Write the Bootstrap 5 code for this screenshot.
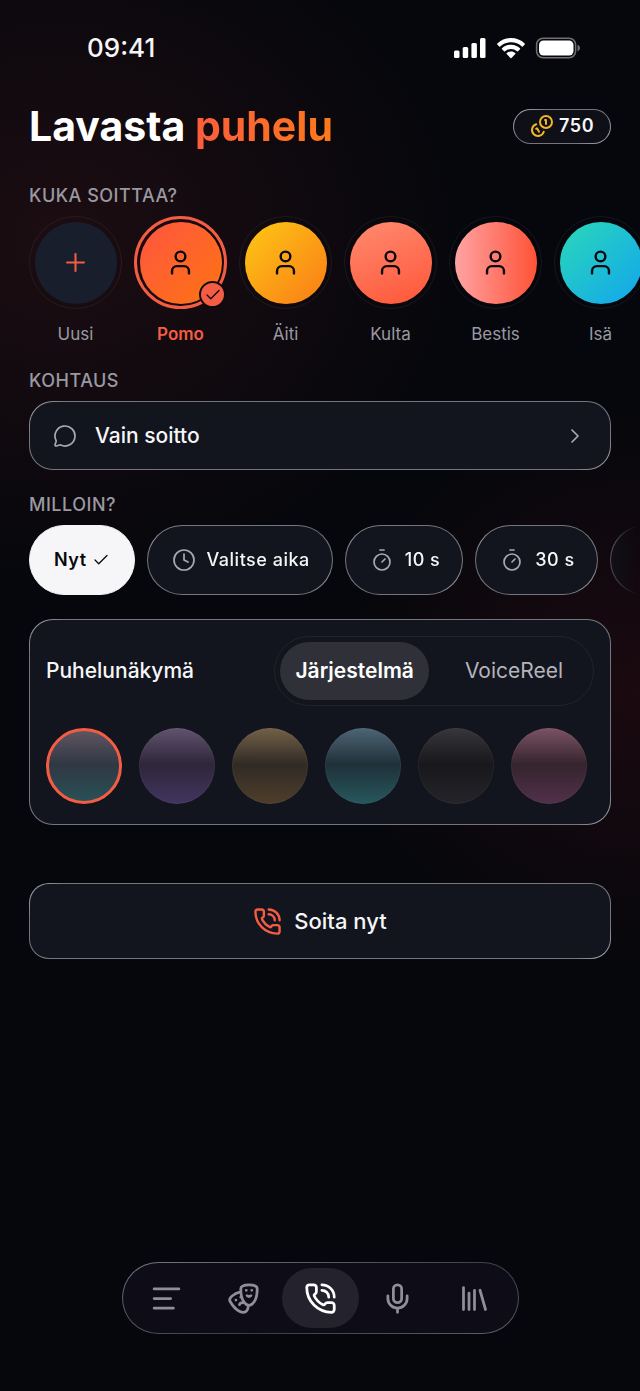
<!DOCTYPE html>
<html lang="fi" data-bs-theme="dark">
<head>
<meta charset="utf-8">
<meta name="viewport" content="width=device-width, initial-scale=1">
<title>Lavasta puhelu</title>
<link href="https://cdn.jsdelivr.net/npm/bootstrap@5.3.0/dist/css/bootstrap.min.css" rel="stylesheet">
<style>
  :root { --coral: #f45d43; --muted: #9a99a1; --fill: #12141e; --ink: #08080d; --edge: 29px; }
  body {
    font-family: Inter, "Liberation Sans", sans-serif;
    color: #f6f6f8;
    background:
      radial-gradient(400px 340px at 60px 240px, #1c0d12 0%, #1c0d1200 100%),
      radial-gradient(300px 280px at 100% 690px, #1b0a10 0%, #1b0a1000 100%),
      #06070c;
  }
  svg { fill: none; stroke: currentColor; stroke-width: 2; stroke-linecap: round; stroke-linejoin: round; flex: none; }
  .i18 { width: 18px; height: 18px; }
  .i24 { width: 24px; height: 24px; }
  .i29 { width: 29px; height: 29px; }
  .i33 { width: 33px; height: 33px; }
  .thin { stroke-width: 1.7; }
  .edge-x { padding-left: var(--edge); padding-right: var(--edge); }

  .status { height: 96px; padding: 0 59px 0 87px; }
  .status-icons { gap: 9px; }
  .clock { font-size: 26px; font-weight: 500; line-height: 32px; }
  .status svg { stroke: none; fill: #fff; }

  .page-head { margin-top: 6px; }
  .page-title { font-size: 41px; line-height: 48px; font-weight: 700; }
  .accent { background: linear-gradient(90deg, #fc5c3d, #fb7a1a); -webkit-background-clip: text; background-clip: text; color: transparent; }
  .glass {
    border: 1px solid transparent;
    color: #f6f6f8;
    background:
      linear-gradient(var(--fill), var(--fill)) padding-box,
      linear-gradient(135deg, #b0b0b6 0, #75767d 25px, #75767d calc(100% - 25px), #b0b0b6 100%) border-box;
  }
  .coins { height: 35px; padding: 0 16px; gap: 5px; font-size: 18px; line-height: 24px; font-weight: 600; letter-spacing: .5px; --fill: #0e0f17; }
  .coins svg { color: #f0b429; }

  .block { margin-top: 23px; }
  .block.first { margin-top: 34px; }
  .block-label { font-size: 18px; line-height: 24px; font-weight: 500; letter-spacing: .5px; color: var(--muted); margin-bottom: 8px; }
  .scroller { overflow-x: auto; scrollbar-width: none; gap: 12px; }
  .scroller::-webkit-scrollbar { display: none; }

  .contact { width: 93px; flex: none; font-size: 17px; line-height: 24px; color: var(--muted); gap: 13px; }
  .ring { width: 93px; height: 93px; border: 1px solid #ffffff10; }
  .face { width: 82px; height: 82px; color: var(--ink); }
  .face.add { background: #191e2d; color: var(--coral); }
  .picked { color: var(--coral); font-weight: 600; }
  .picked .ring { border: 3px solid var(--coral); }
  .tick { right: -2px; bottom: -2px; width: 27px; height: 27px; background: var(--coral); color: var(--ink); border: 2px solid #10090d; }

  .scene { height: 69px; border-radius: 24px; padding: 0 23px; gap: 18px; font-size: 21px; line-height: 28px; font-weight: 500; }
  .scene svg, .when svg { color: #a9a9b1; }

  .times { -webkit-mask-image: linear-gradient(90deg, #000 calc(100% - 45px), transparent calc(100% - 2px)); mask-image: linear-gradient(90deg, #000 calc(100% - 45px), transparent calc(100% - 2px)); }
  .when { height: 70px; flex: none; padding: 0 22px 0 24px; gap: 11px; font-size: 18px; line-height: 24px; font-weight: 500; letter-spacing: .5px; cursor: pointer; }
  .btn-check:checked + .when { background: #f6f6f8; border-color: #f6f6f8; color: var(--ink); font-weight: 600; gap: 5px; padding: 0 24px; }
  .btn-check:checked + .when svg { color: var(--ink); }

  .look { margin-top: 24px; border-radius: 24px; padding: 16px; }
  .look-title { font-size: 21px; line-height: 28px; font-weight: 500; }
  .switch { height: 70px; padding: 5px; border: 1px solid #ffffff10; }
  .switch label { padding: 0 15px; font-size: 21px; line-height: 28px; color: #b5b4bc; cursor: pointer; }
  .switch label.wide { padding: 0 25px 0 36px; }
  .switch .btn-check:checked + label { background: #303038; color: #fff; font-weight: 600; }
  .swatches { margin-top: 22px; gap: 17px; padding-bottom: 4px; }
  .swatch { width: 76px; height: 76px; border: 1px solid #ffffff0c; cursor: pointer; background: linear-gradient(var(--a), var(--b) 48%, var(--c)) border-box; }
  .btn-check:checked + .swatch { border: 3px solid var(--coral); }

  .call { margin-top: 58px; height: 76px; border-radius: 20px; font-size: 22px; line-height: 28px; font-weight: 500; gap: 12px; }
  .call svg { color: var(--coral); }

  .dock { height: 72px; padding: 5px; margin-bottom: 57px; --fill: #0d0c17;
    background:
      linear-gradient(var(--fill), var(--fill)) padding-box,
      linear-gradient(165deg, #77777f, #3c3c45 60%, #606068) border-box; }
  .dock a { width: 77px; height: 60px; color: #8f8e9b; }
  .dock a.active { background: #24232d; color: #fff; }
</style>
</head>
<body>
<svg class="d-none" aria-hidden="true">
  <symbol id="person" viewBox="0 0 24 24"><path d="M19 21v-2a4 4 0 0 0-4-4H9a4 4 0 0 0-4 4v2"/><circle cx="12" cy="7" r="4"/></symbol>
  <symbol id="check" viewBox="0 0 24 24"><path d="M20 6 9 17l-5-5"/></symbol>
  <symbol id="timer" viewBox="0 0 24 24"><path d="M10 2h4M12 14l3-3"/><circle cx="12" cy="14" r="8"/></symbol>
  <symbol id="phone" viewBox="0 0 24 24"><path d="M13 2a9 9 0 0 1 9 9M13 6a5 5 0 0 1 5 5"/><path d="M13.832 16.568a1 1 0 0 0 1.213-.303l.355-.465A2 2 0 0 1 17 15h3a2 2 0 0 1 2 2v3a2 2 0 0 1-2 2A18 18 0 0 1 2 4a2 2 0 0 1 2-2h3a2 2 0 0 1 2 2v3a2 2 0 0 1-.8 1.6l-.468.351a1 1 0 0 0-.292 1.233 14 14 0 0 0 6.392 6.384"/></symbol>
</svg>

<div class="d-flex flex-column min-vh-100 overflow-hidden">
  <div class="status d-flex align-items-center justify-content-between">
    <span class="clock">09:41</span>
    <div class="status-icons d-flex align-items-center">
      <svg width="34" height="22" viewBox="0 0 34 22" aria-hidden="true"><rect x="1" y="13.500" width="5.500" height="7.500" rx="1.500"/><rect x="9.700" y="10" width="5.500" height="11" rx="1.500"/><rect x="18.400" y="6" width="5.500" height="15" rx="1.500"/><rect x="27" y="1" width="5.500" height="20" rx="1.500"/></svg>
      <svg width="30" height="22" viewBox="0 0 30 22" aria-hidden="true"><path d="M15 1c5.300 0 10.100 2 13.700 5.400.3.300.3.700 0 1l-1.900 2c-.3.300-.7.300-1 0A15.700 15.700 0 0 0 15 5.200c-4.100 0-7.900 1.600-10.800 4.200-.3.300-.7.300-1 0l-1.900-2c-.3-.3-.3-.7 0-1A19.900 19.900 0 0 1 15 1Z"/><path d="M15 7.800c3.500 0 6.600 1.300 9 3.500.3.300.3.700 0 1l-2 2c-.3.300-.7.300-1 0a9 9 0 0 0-12 0c-.3.300-.7.300-1 0l-2-2c-.3-.3-.3-.7 0-1 2.400-2.200 5.500-3.500 9-3.500Z"/><path d="M15 14.500c1.700 0 3.200.6 4.300 1.600.3.300.3.700 0 1l-3.800 3.800c-.3.300-.7.300-1 0l-3.800-3.800c-.3-.3-.3-.7 0-1a6.400 6.400 0 0 1 4.300-1.600Z"/></svg>
      <svg width="46" height="22" viewBox="0 0 46 22" aria-hidden="true"><rect x="1.600" y="1.200" width="39" height="19.600" rx="6.500" style="fill:none;stroke:#707074;stroke-width:1.500"/><rect x="4" y="3.500" width="34.500" height="15" rx="4.500"/><path d="M42.500 7.800c1.500.5 2.500 1.700 2.500 3.200s-1 2.700-2.500 3.200Z" style="fill:#707074"/></svg>
    </div>
  </div>

  <main>
    <header class="page-head edge-x d-flex align-items-center justify-content-between">
      <h1 class="page-title mb-0">Lavasta <span class="accent">puhelu</span></h1>
      <div class="coins glass rounded-pill d-flex align-items-center">
        <svg class="i24" viewBox="0 0 24 24" aria-hidden="true"><path d="M13.744 17.736a6 6 0 1 1-7.480-7.480M15 6h1v4M6.134 14.768l.866-.5 2 3.464"/><circle cx="16" cy="8" r="6"/></svg>
        <span>750</span>
      </div>
    </header>

    <section class="block first">
      <h2 class="block-label edge-x">KUKA SOITTAA?</h2>
      <div class="scroller edge-x d-flex">
        <button type="button" class="contact btn p-0 border-0 d-flex flex-column align-items-center">
          <span class="ring rounded-circle d-flex align-items-center justify-content-center"><span class="face add rounded-circle d-flex align-items-center justify-content-center"><svg class="i29 thin" viewBox="0 0 24 24"><path d="M5 12h14M12 5v14"/></svg></span></span>
          <span>Uusi</span>
        </button>
        <button type="button" class="contact picked btn p-0 border-0 d-flex flex-column align-items-center" aria-pressed="true">
          <span class="ring rounded-circle d-flex align-items-center justify-content-center position-relative"><span class="face rounded-circle d-flex align-items-center justify-content-center" style="background:linear-gradient(135deg,#ff5540,#fd7412)"><svg class="i29"><use href="#person"/></svg></span><span class="tick position-absolute rounded-circle d-flex align-items-center justify-content-center"><svg class="i18 thin"><use href="#check"/></svg></span></span>
          <span>Pomo</span>
        </button>
        <button type="button" class="contact btn p-0 border-0 d-flex flex-column align-items-center">
          <span class="ring rounded-circle d-flex align-items-center justify-content-center"><span class="face rounded-circle d-flex align-items-center justify-content-center" style="background:linear-gradient(135deg,#fdc814,#fa7b17)"><svg class="i29"><use href="#person"/></svg></span></span>
          <span>Äiti</span>
        </button>
        <button type="button" class="contact btn p-0 border-0 d-flex flex-column align-items-center">
          <span class="ring rounded-circle d-flex align-items-center justify-content-center"><span class="face rounded-circle d-flex align-items-center justify-content-center" style="background:linear-gradient(160deg,#ff8a70,#ff5638)"><svg class="i29"><use href="#person"/></svg></span></span>
          <span>Kulta</span>
        </button>
        <button type="button" class="contact btn p-0 border-0 d-flex flex-column align-items-center">
          <span class="ring rounded-circle d-flex align-items-center justify-content-center"><span class="face rounded-circle d-flex align-items-center justify-content-center" style="background:linear-gradient(90deg,#ffa3a3,#ff5236)"><svg class="i29"><use href="#person"/></svg></span></span>
          <span>Bestis</span>
        </button>
        <button type="button" class="contact btn p-0 border-0 d-flex flex-column align-items-center">
          <span class="ring rounded-circle d-flex align-items-center justify-content-center"><span class="face rounded-circle d-flex align-items-center justify-content-center" style="background:linear-gradient(135deg,#2ad8b8,#12a5ee)"><svg class="i29"><use href="#person"/></svg></span></span>
          <span>Isä</span>
        </button>
      </div>
    </section>

    <section class="block edge-x">
      <h2 class="block-label">KOHTAUS</h2>
      <button type="button" class="scene glass w-100 d-flex align-items-center">
        <svg class="i24 thin" viewBox="0 0 24 24"><path d="M2.992 16.342a2 2 0 0 1 .094 1.167l-1.065 3.290a1 1 0 0 0 1.236 1.168l3.413-.998a2 2 0 0 1 1.099.092 10 10 0 1 0-4.777-4.719"/></svg>
        <span>Vain soitto</span>
        <svg class="i24 thin ms-auto" viewBox="0 0 24 24"><path d="m9 18 6-6-6-6"/></svg>
      </button>
    </section>

    <section class="block">
      <h2 class="block-label edge-x">MILLOIN?</h2>
      <div class="scroller times edge-x d-flex">
        <input type="radio" class="btn-check" name="when" id="w0" checked><label class="when glass rounded-pill d-flex align-items-center" for="w0">Nyt <svg class="i18 thin"><use href="#check"/></svg></label>
        <input type="radio" class="btn-check" name="when" id="w1"><label class="when glass rounded-pill d-flex align-items-center" for="w1"><svg class="i24 thin" viewBox="0 0 24 24"><circle cx="12" cy="12" r="10"/><path d="M12 6v6l4 2"/></svg>Valitse aika</label>
        <input type="radio" class="btn-check" name="when" id="w2"><label class="when glass rounded-pill d-flex align-items-center" for="w2"><svg class="i24 thin"><use href="#timer"/></svg>10 s</label>
        <input type="radio" class="btn-check" name="when" id="w3"><label class="when glass rounded-pill d-flex align-items-center" for="w3"><svg class="i24 thin"><use href="#timer"/></svg>30 s</label>
        <input type="radio" class="btn-check" name="when" id="w4"><label class="when glass rounded-pill d-flex align-items-center" for="w4" aria-label="Lisää"><svg class="i24 thin"><use href="#timer"/></svg></label>
      </div>
    </section>

    <div class="edge-x">
      <section class="look glass">
        <div class="d-flex align-items-center justify-content-between">
          <span class="look-title">Puhelunäkymä</span>
          <div class="switch rounded-pill d-flex align-items-stretch">
            <input type="radio" class="btn-check" name="view" id="v0" checked><label class="rounded-pill d-flex align-items-center" for="v0">Järjestelmä</label>
            <input type="radio" class="btn-check" name="view" id="v1"><label class="wide rounded-pill d-flex align-items-center" for="v1">VoiceReel</label>
          </div>
        </div>
        <div class="swatches d-flex flex-wrap">
          <input type="radio" class="btn-check" name="bg" id="b0" checked><label class="swatch rounded-circle" for="b0" aria-label="Sininen" style="--a:#625763;--b:#303844;--c:#285258"></label>
          <input type="radio" class="btn-check" name="bg" id="b1"><label class="swatch rounded-circle" for="b1" aria-label="Violetti" style="--a:#62536f;--b:#2e263a;--c:#42355f"></label>
          <input type="radio" class="btn-check" name="bg" id="b2"><label class="swatch rounded-circle" for="b2" aria-label="Kulta" style="--a:#736148;--b:#302b25;--c:#4e3e2a"></label>
          <input type="radio" class="btn-check" name="bg" id="b3"><label class="swatch rounded-circle" for="b3" aria-label="Turkoosi" style="--a:#4e6575;--b:#203039;--c:#26585d"></label>
          <input type="radio" class="btn-check" name="bg" id="b4"><label class="swatch rounded-circle" for="b4" aria-label="Musta" style="--a:#37373b;--b:#18181c;--c:#252529"></label>
          <input type="radio" class="btn-check" name="bg" id="b5"><label class="swatch rounded-circle" for="b5" aria-label="Roosa" style="--a:#7b5364;--b:#35242d;--c:#52304b"></label>
        </div>
      </section>

      <button type="button" class="call glass w-100 d-flex align-items-center justify-content-center"><svg class="i29"><use href="#phone"/></svg>Soita nyt</button>
    </div>
  </main>

  <nav class="dock glass rounded-pill d-flex mt-auto align-self-center" aria-label="Päävalikko">
    <a href="#menu" aria-label="Valikko" class="rounded-pill d-flex align-items-center justify-content-center"><svg class="i33" viewBox="0 0 24 24"><path d="M3 5h18M3 12h12M3 19h14"/></svg></a>
    <a href="#scenes" aria-label="Kohtaukset" class="rounded-pill d-flex align-items-center justify-content-center"><svg class="i33" viewBox="0 0 24 24"><path d="M10 11h.01M14 6h.01M18 6h.01M6.500 13.100h.01M22 5c0 9-4 12-6 12s-6-3-6-12c0-2 2-3 6-3s6 1 6 3M17.400 9.900c-.8.800-2 .8-2.800 0M10.100 7.100C9 7.200 7.700 7.700 6 8.600c-3.500 2-4.700 3.900-3.700 5.600 4.500 7.800 9.500 8.400 11.200 7.400.9-.5 1.900-2.100 1.900-4.700M9.100 16.500c.3-1.100 1.400-1.700 2.400-1.400"/></svg></a>
    <a href="#call" aria-label="Puhelu" aria-current="page" class="active rounded-pill d-flex align-items-center justify-content-center"><svg class="i33"><use href="#phone"/></svg></a>
    <a href="#record" aria-label="Äänitys" class="rounded-pill d-flex align-items-center justify-content-center"><svg class="i33" viewBox="0 0 24 24"><path d="M12 19v3M19 10v2a7 7 0 0 1-14 0v-2"/><rect x="9" y="2" width="6" height="13" rx="3"/></svg></a>
    <a href="#library" aria-label="Kirjasto" class="rounded-pill d-flex align-items-center justify-content-center"><svg class="i33" viewBox="0 0 24 24"><path d="m16 6 4 14M12 6v14M8 8v12M4 4v16"/></svg></a>
  </nav>
</div>
<script src="https://cdn.jsdelivr.net/npm/bootstrap@5.3.0/dist/js/bootstrap.bundle.min.js"></script>
</body>
</html>
